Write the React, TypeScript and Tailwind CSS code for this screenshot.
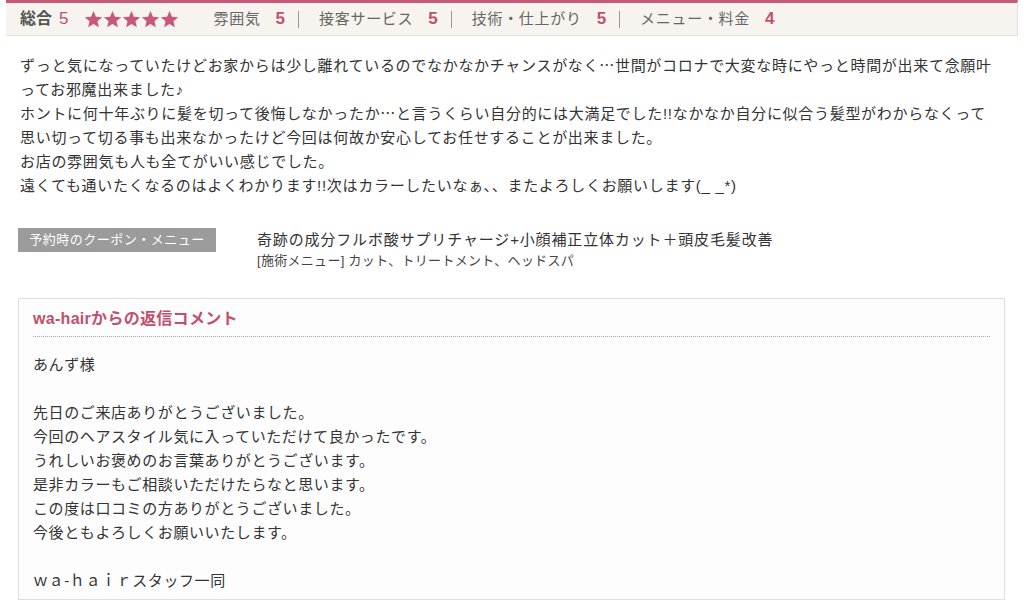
const FONT = {
  fontFamily: '"Liberation Sans", "Noto Sans CJK JP", sans-serif',
};

const CJK = { fontFamily: '"Noto Sans CJK JP", sans-serif' };

const RATINGS: { label: string; score: number }[] = [
  { label: "雰囲気", score: 5 },
  { label: "接客サービス", score: 5 },
  { label: "技術・仕上がり", score: 5 },
  { label: "メニュー・料金", score: 4 },
];

const REVIEW = [
  "ずっと気になっていたけどお家からは少し離れているのでなかなかチャンスがなく…世間がコロナで大変な時にやっと時間が出来て念願叶",
  "ってお邪魔出来ました♪",
  "ホントに何十年ぶりに髪を切って後悔しなかったか…と言うくらい自分的には大満足でした!!なかなか自分に似合う髪型がわからなくって",
  "思い切って切る事も出来なかったけど今回は何故か安心してお任せすることが出来ました。",
  "お店の雰囲気も人も全てがいい感じでした。",
  "遠くても通いたくなるのはよくわかります!!次はカラーしたいなぁ、、またよろしくお願いします(_ _*)",
];

const REPLY = [
  "あんず様",
  "",
  "先日のご来店ありがとうございました。",
  "今回のヘアスタイル気に入っていただけて良かったです。",
  "うれしいお褒めのお言葉ありがとうございます。",
  "是非カラーもご相談いただけたらなと思います。",
  "この度は口コミの方ありがとうございました。",
  "今後ともよろしくお願いいたします。",
  "",
  "ｗａ-ｈａｉｒスタッフ一同",
];

function Star() {
  return (
    <svg width="19" height="19" viewBox="0 0 24 24" aria-hidden>
      <path
        d="M12 1.2l3.1 7.2 7.8.6-5.9 5.1 1.8 7.7L12 17.7l-6.8 4.1 1.8-7.7-5.9-5.1 7.8-.6z"
        fill="#c8587a"
      />
    </svg>
  );
}

// the ellipsis is set in the CJK face so it sits mid-height like the original
function ReviewLine({ text }: { text: string }) {
  const parts = text.split("…");
  return (
    <div className="h-[24px] whitespace-nowrap">
      {parts.map((p, i) => (
        <span key={i}>
          {p}
          {i < parts.length - 1 && (
            <span className="leading-none" style={CJK}>
              …
            </span>
          )}
        </span>
      ))}
    </div>
  );
}

export default function App() {
  return (
    <div className="h-[600px] w-[1024px] overflow-hidden bg-white text-[#333]" style={FONT}>
      {/* rating bar */}
      <div className="mx-[6px] flex h-[36px] items-center border-t-[3px] border-r border-b border-t-[#c45a77] border-r-[#e2e0dc] border-b-[#e2e0dc] bg-[#f7f4ef] pl-[14px]">
        <span className="text-[16px] font-bold text-[#555]">総合</span>
        <span className="ml-[7px] text-[17px] text-[#c0506e]">5</span>
        <span className="ml-[16px] flex">
          {Array.from({ length: 5 }).map((_, i) => (
            <Star key={i} />
          ))}
        </span>
        <div className="ml-[34px] flex items-center">
          {RATINGS.map((r, i) => (
            <div key={r.label} className="flex items-center">
              <span className="text-[15px] tracking-[0.7px] text-[#666]">{r.label}</span>
              <span className="ml-[15px] text-[17px] font-bold text-[#c0506e]">{r.score}</span>
              {i < RATINGS.length - 1 && (
                <span className="ml-[13px] mr-[20px] h-[17px] w-px bg-[#999]" />
              )}
            </div>
          ))}
        </div>
      </div>

      {/* review body */}
      <div className="mt-[18px] pl-[20px] text-[15px] leading-[24px] tracking-[0.7px]">
        {REVIEW.map((line, i) => (
          <ReviewLine key={i} text={line} />
        ))}
      </div>

      {/* coupon */}
      <div className="mt-[30px] flex pl-[18px]">
        <div className="flex h-[24px] w-[198px] items-center justify-center bg-[#9b9b9b] text-[13px] tracking-[0.5px] text-white">
          予約時のクーポン・メニュー
        </div>
        <div className="ml-[41px] mt-[1px]">
          <div className="text-[15px] leading-[22px] tracking-[0.85px]">
            奇跡の成分フルボ酸サプリチャージ+小顔補正立体カット＋頭皮毛髪改善
          </div>
          <div className="text-[13px] leading-[20px] tracking-[0.3px] text-[#444]">
            [施術メニュー] カット、トリートメント、ヘッドスパ
          </div>
        </div>
      </div>

      {/* reply */}
      <div className="ml-[18px] mt-[27px] w-[987px] border border-[#ddd] bg-[#fdfdfd] px-[14px] pb-[6px] pt-[9px]">
        <div className="border-b border-dotted border-[#aaa] pb-[6px] text-[16px] font-bold leading-[22px] tracking-[0.3px] text-[#c0506e]">
          wa-hairからの返信コメント
        </div>
        <div className="mt-[16px] text-[15px] leading-[24px] tracking-[0.6px]">
          {REPLY.map((line, i) => (
            <div key={i} className="h-[24px] whitespace-nowrap">
              {line}
            </div>
          ))}
        </div>
      </div>
    </div>
  );
}
